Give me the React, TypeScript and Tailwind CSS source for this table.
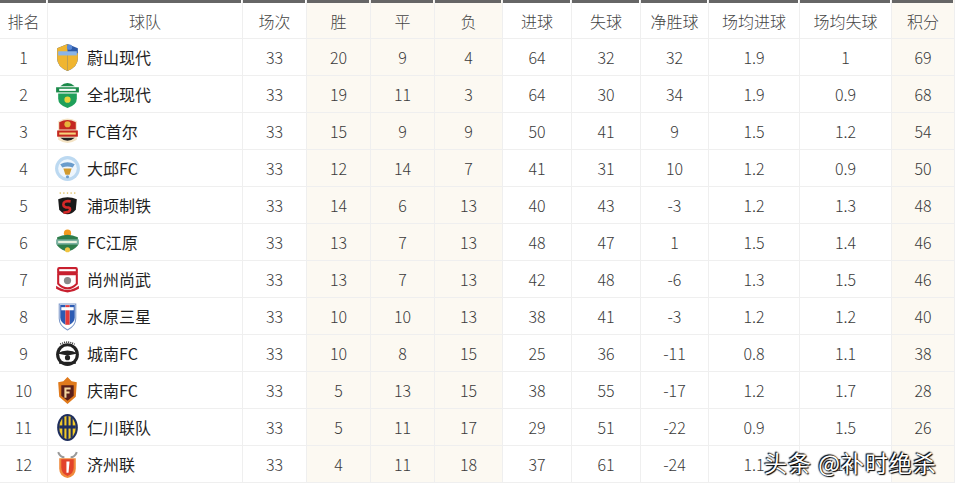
import { FC } from 'react'

type Row = {
  rank: number
  team: string
  played: number
  w: number
  d: number
  l: number
  gf: number
  ga: number
  gd: number
  avgF: string
  avgA: string
  pts: number
}

const rows: Row[] = [
  { rank: 1, team: '蔚山现代', played: 33, w: 20, d: 9, l: 4, gf: 64, ga: 32, gd: 32, avgF: '1.9', avgA: '1', pts: 69 },
  { rank: 2, team: '全北现代', played: 33, w: 19, d: 11, l: 3, gf: 64, ga: 30, gd: 34, avgF: '1.9', avgA: '0.9', pts: 68 },
  { rank: 3, team: 'FC首尔', played: 33, w: 15, d: 9, l: 9, gf: 50, ga: 41, gd: 9, avgF: '1.5', avgA: '1.2', pts: 54 },
  { rank: 4, team: '大邱FC', played: 33, w: 12, d: 14, l: 7, gf: 41, ga: 31, gd: 10, avgF: '1.2', avgA: '0.9', pts: 50 },
  { rank: 5, team: '浦项制铁', played: 33, w: 14, d: 6, l: 13, gf: 40, ga: 43, gd: -3, avgF: '1.2', avgA: '1.3', pts: 48 },
  { rank: 6, team: 'FC江原', played: 33, w: 13, d: 7, l: 13, gf: 48, ga: 47, gd: 1, avgF: '1.5', avgA: '1.4', pts: 46 },
  { rank: 7, team: '尚州尚武', played: 33, w: 13, d: 7, l: 13, gf: 42, ga: 48, gd: -6, avgF: '1.3', avgA: '1.5', pts: 46 },
  { rank: 8, team: '水原三星', played: 33, w: 10, d: 10, l: 13, gf: 38, ga: 41, gd: -3, avgF: '1.2', avgA: '1.2', pts: 40 },
  { rank: 9, team: '城南FC', played: 33, w: 10, d: 8, l: 15, gf: 25, ga: 36, gd: -11, avgF: '0.8', avgA: '1.1', pts: 38 },
  { rank: 10, team: '庆南FC', played: 33, w: 5, d: 13, l: 15, gf: 38, ga: 55, gd: -17, avgF: '1.2', avgA: '1.7', pts: 28 },
  { rank: 11, team: '仁川联队', played: 33, w: 5, d: 11, l: 17, gf: 29, ga: 51, gd: -22, avgF: '0.9', avgA: '1.5', pts: 26 },
  { rank: 12, team: '济州联', played: 33, w: 4, d: 11, l: 18, gf: 37, ga: 61, gd: -24, avgF: '1.1', avgA: '1.5', pts: 26 },
]

const headers = ['排名', '球队', '场次', '胜', '平', '负', '进球', '失球', '净胜球', '场均进球', '场均失球', '积分']
// 胜 / 平 / 负 and 积分 sit on a cream background
const cream = [3, 4, 5, 11]

const Logo: FC<{ rank: number }> = ({ rank }) => {
  switch (rank) {
    case 1:
      return (
        <svg width="27" height="29" viewBox="0 0 26 28">
          <path d="M3 5 L13 1 L23 5 L23 15 Q23 23 13 27 Q3 23 3 15 Z" fill="#2d5aa8" />
          <path d="M3 5 L13 1 L13 27 Q3 23 3 15 Z" fill="#f0b530" />
          <path d="M13 10 L23 10 L23 15 Q23 23 13 27 Z" fill="#f0b530" />
          <rect x="4" y="8" width="18" height="4" fill="#8ab4e8" />
          <circle cx="15" cy="4" r="2.5" fill="#5b8ad6" />
        </svg>
      )
    case 2:
      return (
        <svg width="27" height="29" viewBox="0 0 26 28">
          <path d="M6 6 Q13 0 20 6 Z" fill="#1b8a4a" />
          <rect x="2" y="7" width="22" height="5" fill="#1b8a4a" />
          <rect x="5" y="8.5" width="16" height="2" fill="#fff" />
          <path d="M4 13 L22 13 L22 18 Q22 24 13 27 Q4 24 4 18 Z" fill="#1fa05a" />
          <circle cx="13" cy="19" r="3" fill="#e9d33b" />
        </svg>
      )
    case 3:
      return (
        <svg width="27" height="29" viewBox="0 0 26 28">
          <path d="M4 4 Q13 -1 22 4 L22 22 Q13 28 4 22 Z" fill="#f4e3c4" />
          <path d="M5 5 Q13 1 21 5 L21 12 L5 12 Z" fill="#c4281f" />
          <circle cx="13" cy="7" r="3" fill="#e6b43a" />
          <rect x="3" y="13" width="20" height="6" fill="#c4281f" />
          <rect x="5" y="15" width="16" height="2" fill="#f7d37b" />
          <path d="M6 20 L20 20 Q13 26 6 20 Z" fill="#222" />
        </svg>
      )
    case 4:
      return (
        <svg width="27" height="29" viewBox="0 0 26 28">
          <circle cx="13" cy="14" r="12" fill="#bcd9f1" />
          <circle cx="13" cy="14" r="9" fill="#eef6fd" />
          <path d="M6 10 Q13 6 20 10 L18 13 Q13 11 8 13 Z" fill="#6a9ccc" />
          <path d="M9 14 L17 14 L15 20 L11 20 Z" fill="#d19a2f" />
          <circle cx="13" cy="22" r="1.5" fill="#6a9ccc" />
        </svg>
      )
    case 5:
      return (
        <svg width="27" height="29" viewBox="0 0 26 28">
          <g fill="#e0c36a">
            <circle cx="6" cy="2" r="0.8" />
            <circle cx="9.5" cy="2" r="0.8" />
            <circle cx="13" cy="2" r="0.8" />
            <circle cx="16.5" cy="2" r="0.8" />
            <circle cx="20" cy="2" r="0.8" />
          </g>
          <path d="M4 8 Q13 4 22 8 L21 18 Q13 27 5 18 Z" fill="#1a1a1a" />
          <path d="M16 10 Q9 9 9 13 Q9 16 14 16 Q17 17 14 20 L9 21" stroke="#d62828" strokeWidth="2.5" fill="none" />
        </svg>
      )
    case 6:
      return (
        <svg width="27" height="29" viewBox="0 0 26 28">
          <circle cx="13" cy="5" r="3.5" fill="#f29a1d" />
          <path d="M3 9 Q13 4 23 9 L23 17 Q13 28 3 17 Z" fill="#2e7d4b" />
          <rect x="2" y="11" width="22" height="5" fill="#7ab0a0" />
          <rect x="4" y="12.5" width="18" height="2" fill="#e8f0dd" />
          <circle cx="13" cy="21" r="2.5" fill="#f0c440" />
        </svg>
      )
    case 7:
      return (
        <svg width="27" height="29" viewBox="0 0 26 28">
          <rect x="3" y="2" width="20" height="7" rx="2" fill="#c8202f" />
          <rect x="5" y="4" width="16" height="2" fill="#fff" />
          <path d="M4 9 L22 9 L22 18 Q13 27 4 18 Z" fill="#fff" stroke="#c8202f" strokeWidth="2" />
          <circle cx="13" cy="15" r="3.5" fill="#8a8a8a" />
          <path d="M2 20 Q13 28 24 20 L24 23 Q13 30 2 23 Z" fill="#c8202f" />
        </svg>
      )
    case 8:
      return (
        <svg width="27" height="29" viewBox="0 0 26 28">
          <path d="M5 2 L21 2 L21 16 Q21 23 13 27 Q5 23 5 16 Z" fill="#fff" stroke="#7c98c9" strokeWidth="1" />
          <path d="M6 3 L11 3 L11 22 Q6 19 6 15 Z" fill="#2c5bb3" />
          <path d="M15 3 L20 3 L20 15 Q20 19 15 22 Z" fill="#2c5bb3" />
          <rect x="11" y="3" width="4" height="19" fill="#e53a3a" />
          <rect x="7" y="5" width="12" height="3" fill="#fff" />
        </svg>
      )
    case 9:
      return (
        <svg width="27" height="29" viewBox="0 0 26 28">
          <path d="M6 5 Q13 1 20 5" stroke="#333" strokeWidth="1.5" fill="none" strokeDasharray="1 1" />
          <circle cx="13" cy="15" r="11" fill="#222" />
          <circle cx="13" cy="15" r="8" fill="#fff" />
          <path d="M3 14 Q13 8 23 14 L13 16 Z" fill="#222" />
          <circle cx="13" cy="18" r="2.5" fill="#222" />
          <rect x="5" y="22" width="16" height="2" fill="#222" />
        </svg>
      )
    case 10:
      return (
        <svg width="27" height="29" viewBox="0 0 26 28">
          <path d="M13 1 L17 5 L22 6 L21 20 L13 27 L5 20 L4 6 L9 5 Z" fill="#e07a1c" />
          <path d="M7 9 L19 9 L19 19 L13 24 L7 19 Z" fill="#5a1f1a" />
          <path d="M10 11 L16 11 L16 13 L12 13 L12 15 L15 15 L15 17 L12 17 L12 21 L10 21 Z" fill="#f4d6a0" />
        </svg>
      )
    case 11:
      return (
        <svg width="27" height="29" viewBox="0 0 26 28">
          <ellipse cx="13" cy="14" rx="10" ry="13" fill="#1e2e5e" />
          <ellipse cx="13" cy="14" rx="8" ry="11" fill="#f2c928" />
          <rect x="8" y="4" width="2" height="20" fill="#1e2e5e" />
          <rect x="12" y="3" width="2" height="22" fill="#1e2e5e" />
          <rect x="16" y="4" width="2" height="20" fill="#1e2e5e" />
          <rect x="5" y="12" width="16" height="3" fill="#1e2e5e" />
        </svg>
      )
    default:
      return (
        <svg width="27" height="29" viewBox="0 0 26 28">
          <path d="M4 2 Q6 7 10 7 M22 2 Q20 7 16 7" stroke="#999" strokeWidth="2" fill="none" />
          <path d="M5 8 L21 8 L21 18 Q21 25 13 27 Q5 25 5 18 Z" fill="#f08a3c" />
          <path d="M7 9 L19 9 L19 17 Q19 23 13 25 Q7 23 7 17 Z" fill="#e2432b" />
          <path d="M12 11 L15 11 L14 22 L12 22 Z" fill="#fff" />
        </svg>
      )
  }
}

const App: FC = () => {
  return (
    <div
      className="relative w-[955px] h-[486px] bg-white overflow-hidden text-[#3a3a3a] font-light"
      style={{ fontFamily: '"Microsoft YaHei", "Noto Sans CJK SC", sans-serif' }}
    >
      <div className="grid grid-cols-[48px_195px_64px_64px_64px_68px_69px_69px_68px_91px_92px_63px] text-[16px]">
        {headers.map((h, i) => (
          <div
            key={h}
            className={`h-[39px] flex flex-col border-b border-r border-[#efefef] ${
              cream.includes(i) ? 'bg-[#fcf9f2]' : 'bg-white'
            }`}
          >
            <div className="h-[3px] bg-[#666] mr-px" />
            <div className="flex-1 flex items-center justify-center text-[#444]">{h}</div>
          </div>
        ))}
        {rows.map((r) => {
          const cells = [r.played, r.w, r.d, r.l, r.gf, r.ga, r.gd, r.avgF, r.avgA, r.pts]
          return [
            <div key={`${r.rank}-rank`} className="h-[37px] flex items-center justify-center border-b border-r border-[#efefef]">
              {r.rank}
            </div>,
            <div key={`${r.rank}-team`} className="h-[37px] flex items-center gap-[6px] pl-[6px] border-b border-r border-[#efefef] text-[#1f1f1f]">
              <Logo rank={r.rank} />
              <span className="font-normal">{r.team}</span>
            </div>,
            ...cells.map((c, j) => (
              <div
                key={`${r.rank}-${j}`}
                className={`h-[37px] flex items-center justify-center border-b border-r border-[#efefef] ${
                  cream.includes(j + 2) ? 'bg-[#fcf9f2]' : 'bg-white'
                }`}
              >
                {c}
              </div>
            )),
          ]
        })}
      </div>

      <div className="absolute left-[764px] top-[445px] text-[23px] font-normal text-white tracking-[1px] [text-shadow:0_0_2px_#000,1px_1px_1px_#000,-1px_-1px_1px_#000]">
        头条 @补时绝杀
      </div>
    </div>
  )
}

export default App
